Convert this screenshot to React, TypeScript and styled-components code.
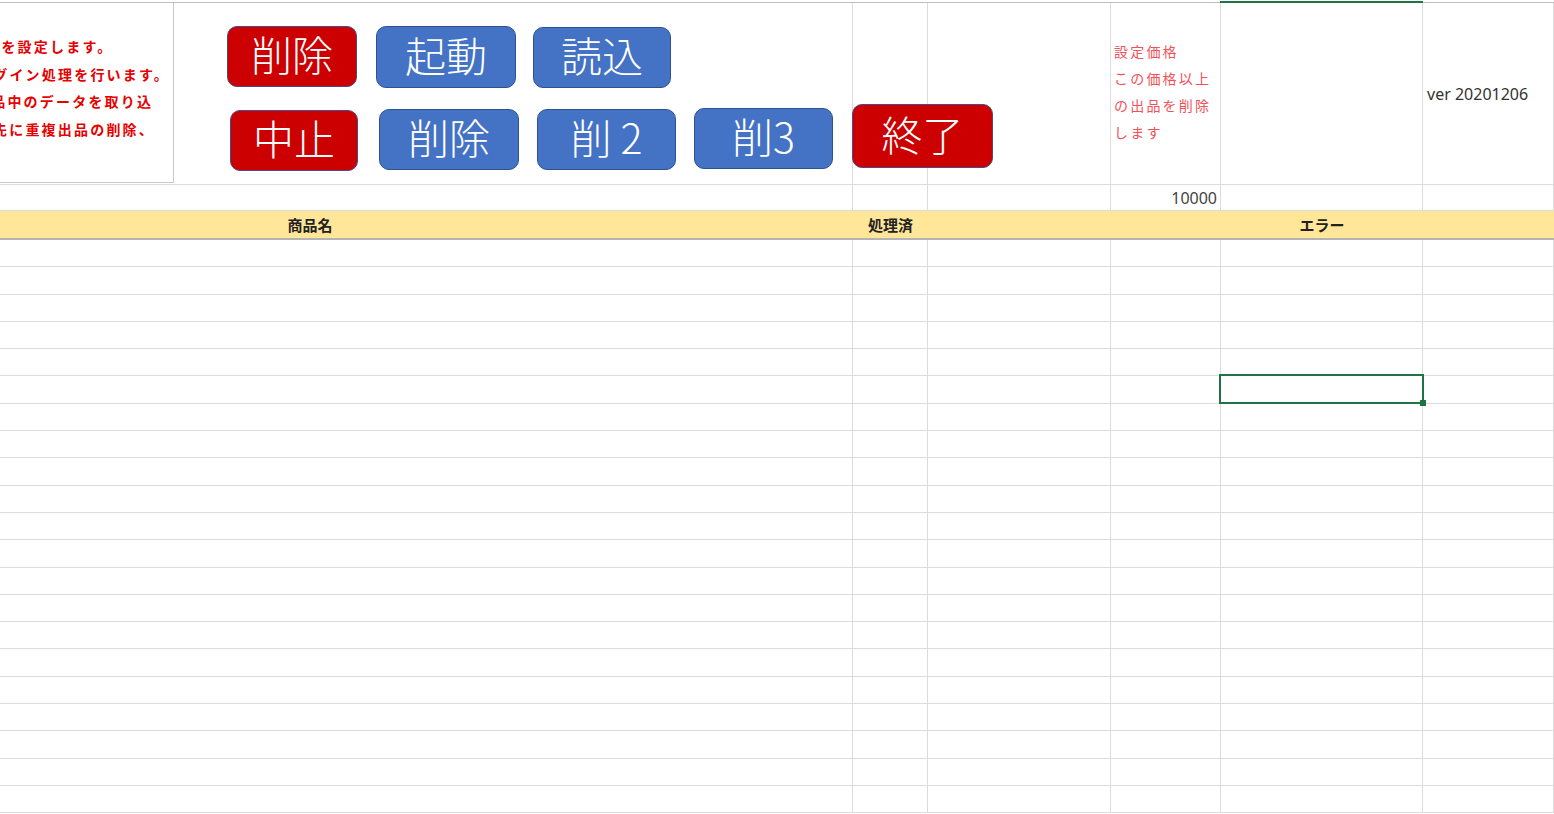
import React from "react";
import styled, { createGlobalStyle, css } from "styled-components";

const COLS = "853px 75px 183px 110px 202px 1fr";
const GRID = "#dcdcdc";
const JP = `"Noto Sans CJK JP", "Noto Sans", sans-serif`;

const GlobalStyle = createGlobalStyle`
  html, body {
    margin: 0;
    padding: 0;
    background: #fff;
  }
  body {
    font-family: ${JP};
  }
`;

type Tone = "red" | "blue";

type Shape = {
  label: string;
  tone: Tone;
  x: number;
  y: number;
  w: number;
  h: number;
};

const shapes: Shape[] = [
  { label: "削除", tone: "red", x: 227, y: 26, w: 130, h: 61 },
  { label: "起動", tone: "blue", x: 376, y: 26, w: 140, h: 62 },
  { label: "読込", tone: "blue", x: 533, y: 27, w: 138, h: 61 },
  { label: "中止", tone: "red", x: 230, y: 110, w: 128, h: 61 },
  { label: "削除", tone: "blue", x: 379, y: 109, w: 140, h: 61 },
  { label: "削 2", tone: "blue", x: 537, y: 109, w: 139, h: 61 },
  { label: "削3", tone: "blue", x: 694, y: 108, w: 139, h: 61 },
  { label: "終了", tone: "red", x: 852, y: 104, w: 141, h: 64 },
];

// left note box, partly scrolled out of view
const notes = [
  { text: "価格を設定します。", shift: -31 },
  { text: "ログイン処理を行います。", shift: -23 },
  { text: "出品中のデータを取り込", shift: -25 },
  { text: "先に重複出品の削除、", shift: -7 },
];

const priceNote = ["設定価格", "この価格以上", "の出品を削除", "します"];

const BODY_ROWS = 21;
const SELECTED_ROW = 5;

export default function App() {
  return (
    <>
      <GlobalStyle />
      <Viewport>
        <ColumnEdge>
          {[0, 1, 2, 3, 4, 5].map((i) => (
            <EdgeCell key={i} $active={i === 4} />
          ))}
        </ColumnEdge>

        <Row $h={182}>
          <Cell />
          <Cell />
          <Cell />
          <Cell $pad="0 0 3px 3px">
            <PriceNote>
              {priceNote.map((line) => (
                <div key={line}>{line}</div>
              ))}
            </PriceNote>
          </Cell>
          <Cell />
          <Cell $pad="0 0 0 4px">
            <Version>ver 20201206</Version>
          </Cell>
        </Row>

        <Row $h={26}>
          <Cell />
          <Cell />
          <Cell />
          <Cell $justify="flex-end" $pad="0 3px 0 0">
            <Value>10000</Value>
          </Cell>
          <Cell />
          <Cell />
        </Row>

        <HeaderRow>
          <HeaderCell $pad="0 233px 0 0">商品名</HeaderCell>
          <HeaderCell>処理済</HeaderCell>
          <HeaderCell />
          <HeaderCell />
          <HeaderCell>エラー</HeaderCell>
          <HeaderCell />
        </HeaderRow>

        {Array.from({ length: BODY_ROWS }).map((_, r) => (
          <Row key={r} $h={27.3}>
            <Cell />
            <Cell />
            <Cell />
            <Cell />
            <Cell>{r === SELECTED_ROW && <Selection />}</Cell>
            <Cell />
          </Row>
        ))}

        <ShapeLayer>
          <TextBox>
            {notes.map((n) => (
              <NoteLine key={n.text} $shift={n.shift}>
                {n.text}
              </NoteLine>
            ))}
          </TextBox>
          {shapes.map((s, i) => (
            <SheetButton
              key={i}
              $tone={s.tone}
              $x={s.x}
              $y={s.y}
              $w={s.w}
              $h={s.h}
            >
              {s.label}
            </SheetButton>
          ))}
        </ShapeLayer>
      </Viewport>
    </>
  );
}

const Viewport = styled.div`
  position: relative;
  width: 1554px;
  height: 814px;
  overflow: hidden;
  background: #fff;
`;

const ColumnEdge = styled.div`
  display: grid;
  grid-template-columns: ${COLS};
  height: 3px;
`;

const EdgeCell = styled.div<{ $active?: boolean }>`
  box-sizing: border-box;
  height: 3px;
  margin-left: ${(p) => (p.$active ? "-1px" : "0")};
  border-bottom: ${(p) => (p.$active ? "2px solid #217346" : "1px solid #bdbdbd")};
`;

const Row = styled.div<{ $h: number }>`
  display: grid;
  grid-template-columns: ${COLS};
  height: ${(p) => p.$h}px;
`;

const Cell = styled.div<{ $justify?: string; $pad?: string }>`
  position: relative;
  box-sizing: border-box;
  display: flex;
  align-items: center;
  justify-content: ${(p) => p.$justify || "flex-start"};
  padding: ${(p) => p.$pad || "0"};
  border-right: 1px solid ${GRID};
  border-bottom: 1px solid ${GRID};
  min-width: 0;
`;

const HeaderRow = styled.div`
  display: grid;
  grid-template-columns: ${COLS};
  height: 29px;
  box-sizing: border-box;
  background: #ffe699;
  border-bottom: 2px solid #b3b3b3;
`;

const HeaderCell = styled.div<{ $pad?: string }>`
  display: flex;
  align-items: center;
  justify-content: center;
  padding: ${(p) => p.$pad || "0"};
  font-family: ${JP};
  font-size: 15px;
  font-weight: 700;
  color: #222;
`;

const PriceNote = styled.div`
  font-family: ${JP};
  font-size: 14px;
  line-height: 27px;
  letter-spacing: 2.2px;
  color: #f0525a;
  white-space: nowrap;
`;

const Version = styled.span`
  font-family: "Noto Sans", sans-serif;
  font-size: 16px;
  color: #333;
  white-space: nowrap;
`;

const Value = styled.span`
  font-family: "Noto Sans", sans-serif;
  font-size: 16px;
  color: #444;
`;

const Selection = styled.div`
  position: absolute;
  z-index: 2;
  top: -2px;
  left: -2px;
  right: -2px;
  bottom: -1px;
  border: 2px solid #217346;

  &::after {
    content: "";
    position: absolute;
    right: -4px;
    bottom: -4px;
    width: 6px;
    height: 6px;
    background: #217346;
  }
`;

const ShapeLayer = styled.div`
  position: absolute;
  z-index: 3;
  inset: 0;
  pointer-events: none;
  & > * {
    pointer-events: auto;
  }
`;

const TextBox = styled.div`
  position: absolute;
  left: 0;
  top: 3px;
  width: 174px;
  height: 180px;
  box-sizing: border-box;
  padding-top: 30px;
  overflow: hidden;
  background: #fff;
  border-right: 1px solid #c9c9c9;
  border-bottom: 1px solid #c9c9c9;
`;

const NoteLine = styled.div<{ $shift: number }>`
  margin-left: ${(p) => p.$shift}px;
  font-family: ${JP};
  font-size: 14px;
  font-weight: 700;
  line-height: 27.5px;
  letter-spacing: 2.2px;
  color: #e60000;
  white-space: nowrap;
`;

const tones = {
  red: css`
    background: #cc0000;
    border-color: #4b4a86;
  `,
  blue: css`
    background: #4472c4;
    border-color: #2f528f;
  `,
};

const SheetButton = styled.button<{
  $tone: Tone;
  $x: number;
  $y: number;
  $w: number;
  $h: number;
}>`
  position: absolute;
  left: ${(p) => p.$x}px;
  top: ${(p) => p.$y}px;
  width: ${(p) => p.$w}px;
  height: ${(p) => p.$h}px;
  box-sizing: border-box;
  display: flex;
  align-items: center;
  justify-content: center;
  padding: 0 0 6px;
  border: 1.5px solid;
  border-radius: 10px;
  ${(p) => tones[p.$tone]}
  color: #fff;
  font-family: ${JP};
  font-size: 41px;
  font-weight: 300;
  line-height: 1;
  white-space: pre;
  cursor: pointer;
`;
